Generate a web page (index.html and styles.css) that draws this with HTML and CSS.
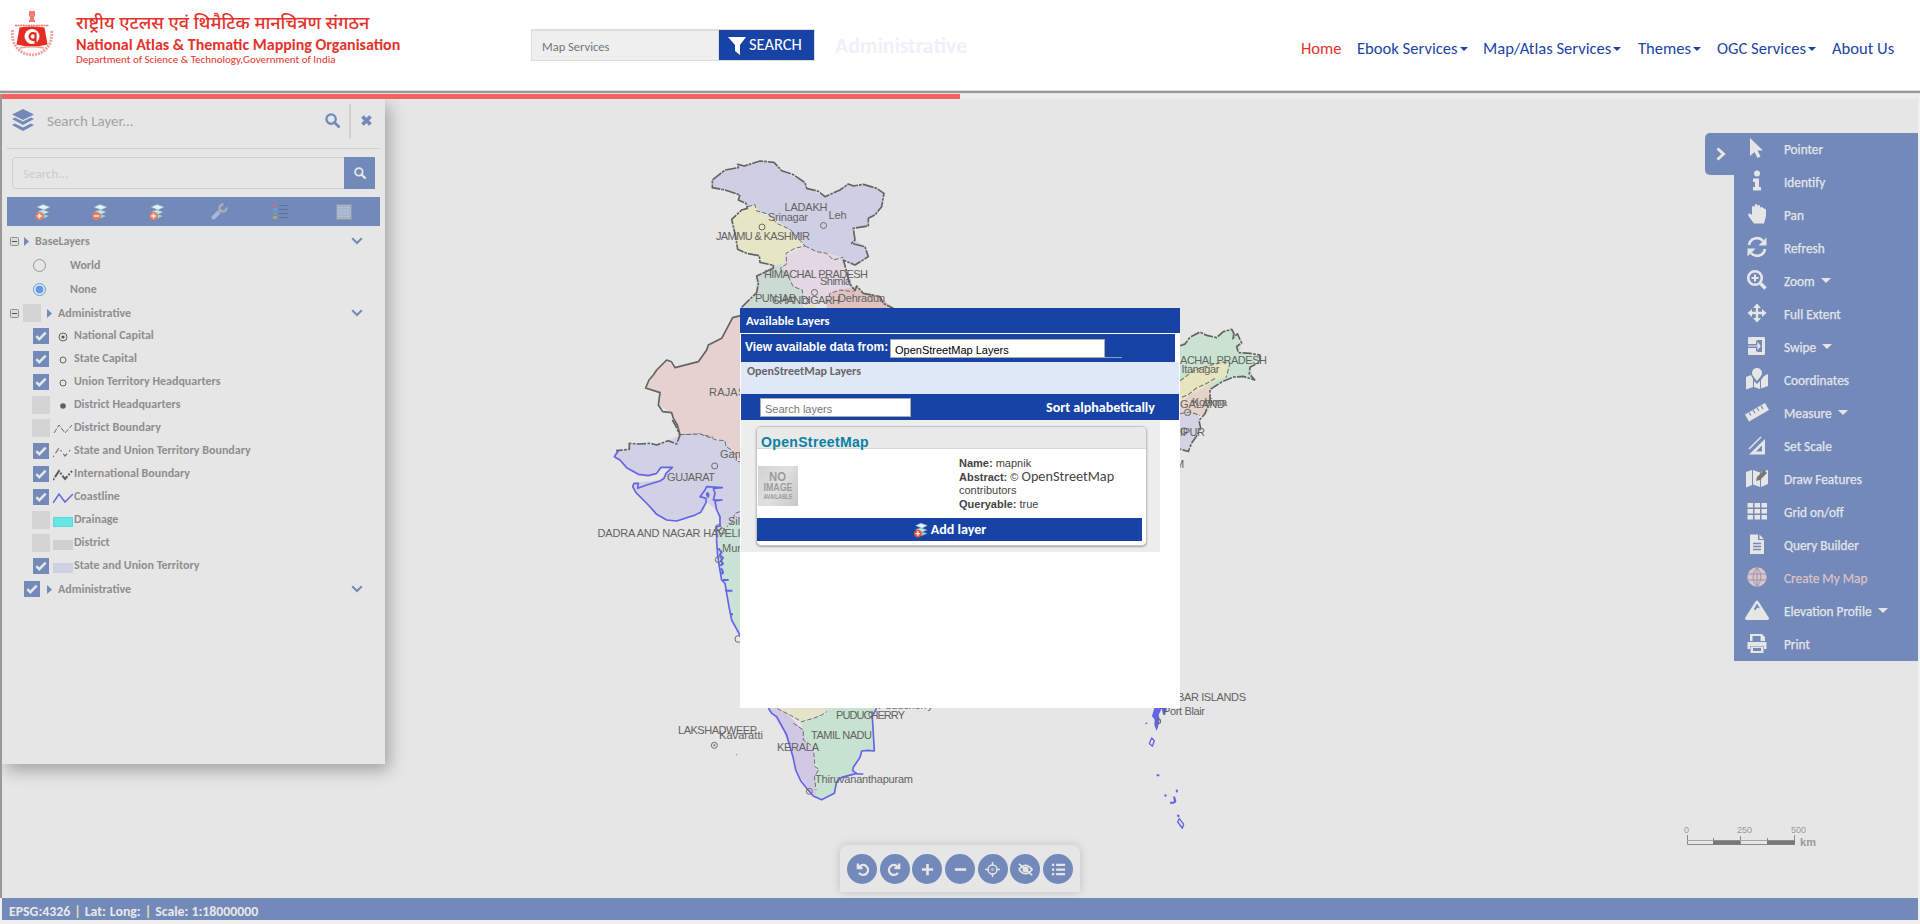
FILE: index.html
```html
<!DOCTYPE html>
<html lang="en">
<head>
<meta charset="utf-8">
<title>National Atlas &amp; Thematic Mapping Organisation</title>
<link rel="stylesheet" href="styles.css">
</head>
<body>
<svg width="0" height="0" class="defs">
  <defs>
    <symbol id="check" viewBox="0 0 16 16"><path d="M3.3 8.2l3 3L12.700 4.700" fill="none" stroke="#e6e6e6" stroke-width="2.500"/></symbol>
    <symbol id="search" viewBox="0 0 16 16"><circle cx="6.500" cy="6.500" r="5" fill="none" stroke="currentColor" stroke-width="2.400"/><path d="M10 10l4.500 4.500" stroke="currentColor" stroke-width="3" stroke-linecap="round"/></symbol>
    <symbol id="stack" viewBox="0 0 16 18"><path d="M2 12.500l6-2 7 2.500-6 2.500z" fill="#a9cbd6" stroke="#5c8ba0" stroke-width=".6"/><path d="M2 8.500l6-2 7 2.500-6 2.500z" fill="#c9e2ea" stroke="#5c8ba0" stroke-width=".6"/><path d="M2 4l6-2.500L15 4 9 7z" fill="#e4f2f6" stroke="#8db3c2" stroke-width=".6"/></symbol>
    <symbol id="chev" viewBox="0 0 12 8"><path d="M1.200 1.200L6 6l4.800-4.800" fill="none" stroke="#7289ba" stroke-width="2"/></symbol>
    <symbol id="tri" viewBox="0 0 5 9"><path d="M0 0l5 4.500L0 9z" fill="#7289ba"/></symbol>
    <symbol id="minus" viewBox="0 0 9 9"><rect x=".5" y=".5" width="8" height="8" rx="1" fill="#dcdcdc" stroke="#8d8d8d"/><path d="M2 4.500h5" stroke="#555"/></symbol>
  </defs>
</svg>

<header class="top">
  <div class="brand">
    <svg class="logo" viewBox="0 0 44 50" width="44" height="50">
      <path d="M19 2h6v5l-1 1v3h1v2h-6v-2h1V8l-1-1z" fill="#ee7d76"/>
      <path d="M5 16.500h34" stroke="#ea7068" stroke-width="1.500" stroke-dasharray="2 .6"/>
      <path d="M9.500 18.500q12-2 25 0l3 17q-15 4-31 0z" fill="#e62b22"/>
      <circle cx="22" cy="27.500" r="7.500" fill="#fff"/>
      <path d="M25.500 23.500v10.500M25.500 25.500a3.300 3.300 0 1 0 0 4" fill="none" stroke="#e62b22" stroke-width="2.200"/>
      <path d="M10 39q12-2.500 24 0" fill="none" stroke="#f09a94" stroke-width="1.500"/>
      <path d="M2.500 21C-1 54 45 54 41.500 21" fill="none" stroke="#f2a29c" stroke-width="3" stroke-dasharray="2 1"/>
    </svg>
    <div class="names">
      <div class="hi" lang="hi">राष्ट्रीय एटलस एवं थिमैटिक मानचित्रण संगठन</div>
      <div class="en">National Atlas &amp; Thematic Mapping Organisation</div>
      <div class="dept">Department of Science &amp; Technology,Government of India</div>
    </div>
  </div>
  <div class="finder">
    <div class="finder-input">Map Services</div>
    <div class="finder-btn"><svg width="18" height="18" viewBox="0 0 18 18"><path d="M0 0h18l-6 8v10l-5-4V8z" fill="#fff"/></svg><span>SEARCH</span></div>
  </div>
  <div class="theme">Administrative</div>
  <nav class="nav">
    <a class="on">Home</a><a class="dd">Ebook Services</a><a class="dd">Map/Atlas Services</a><a class="dd">Themes</a><a class="dd">OGC Services</a><a>About Us</a>
  </nav>
</header>
<div class="rule"></div>

<main class="stage">
  <div class="progress"><div class="bar"></div></div>

  <svg class="map" width="1920" height="924" viewBox="0 0 1920 924">
    <g transform="translate(560 140) scale(.33333)" stroke-linejoin="round">
      <path fill="#cfcfe4" d="M457 120L495 90 535 80 600 63 642 67 665 92 735 128 740 145 795 170 840 150 865 132 910 135 950 145 972 160 965 200 945 225 925 235 925 258 880 265 885 300 915 320 925 350 885 375 850 355 800 340 760 335 735 318 700 280 650 240 620 222 570 212 558 190 535 180 540 165 495 150 457 143z"/>
      <path fill="#e6e6c6" d="M515 238L560 205 588 193 600 222 625 228 680 268 735 318 705 325 678 340 680 372 640 376 600 365 598 347 560 340 533 328 527 290z"/>
      <path fill="#e2d7e2" d="M735 318L770 335 800 340 850 358 860 395 878 440 880 455 840 450 810 460 800 490 730 490 727 450 700 440 685 410 668 380 680 345z"/>
      <path fill="#cbdbd3" d="M640 376L665 372 685 410 700 440 727 450 730 500 760 510 545 510 590 460 590 410z"/>
      <path fill="#e0c3c0" d="M800 490L810 460 840 450 890 438 910 460 960 470 1000 505 1000 560 800 560z"/>
      <path fill="#e5e3bd" d="M735 505l20-15 20 15v20h-40z"/>
      <path fill="#e5d1d0" d="M545 525L518 533 485 595 445 615 415 665 345 683 320 660 290 690 257 740 300 758 295 795 335 818 360 885 420 882 460 892 490 905 500 940 530 960 900 960 900 525z"/>
      <g fill="none" stroke="#636363" stroke-width="5" stroke-dasharray="34 3 8 3">
        <path d="M545 502L590 458 595 430 590 408 640 385 640 376 600 367 598 347 560 340 533 328 527 290 515 238 545 210 562 205 558 190 535 180 540 165 495 150 457 143 457 120 495 90 535 83 533 73 553 78 600 63 642 67 665 92 700 104 735 128 740 145 775 154 795 170 840 150 865 132 880 138 910 133 950 145 972 160 965 200 945 225 925 235 925 258 880 265 885 300 875 310 915 320 925 350 885 375 850 360 860 395 868 430 885 452 890 438 910 460 960 470 970 490 1000 505"/>
        <path stroke-dasharray="none" d="M545 526L518 533 485 595 445 615 440 630 415 665 345 683 334 665 320 660 290 690 280 705 267 720 257 744 300 758 295 795 308 815 335 818 340 835 352 855 360 885"/>
      </g>
      <g fill="none" stroke="#6d6d6d" stroke-width="3" stroke-dasharray="14 6">
        <path d="M562 200L585 194 590 213 625 222 650 250 690 268 735 318 705 325 678 340 680 372 660 385 685 410 700 440 727 450 730 490M735 318L770 335 800 340 820 360 850 352M800 490L810 460 840 450 880 455M355 885L420 882 460 892"/>
      </g>
    </g>
    <g transform="translate(560 420) scale(.33333)" stroke-linejoin="round">
      <path fill="#d1d1e5" d="M168 92L208 88 208 70 290 75 325 62 360 45 420 42 470 60 495 62 510 90 535 125 560 130 560 320 480 315 470 270 440 245 432 270 350 303 310 298 265 255 218 200 225 188 300 180 335 145 305 145 265 167 235 163 180 125 163 110z"/>
      <path fill="#c9e3d6" d="M473 320L560 300 560 650 537 645 510 590 495 490 478 440z"/>
      <path fill="none" stroke="#636363" stroke-width="5" stroke-dasharray="28 4 8 4" d="M337 0L345 14 360 45 350 72 325 62 290 75 270 70 240 72 208 70 208 88 168 92"/>
      <path fill="none" stroke="#6d6d6d" stroke-width="3" stroke-dasharray="14 6" d="M360 44L420 42 470 60 495 62 498 80 515 90 530 110 528 123 540 125M540 275L525 280 515 310 500 320"/>
      <path fill="none" stroke="#6464e6" stroke-width="5" d="M175 92L163 110 180 120 200 143 235 163 265 167 290 160 303 142 337 142 318 160 312 175 300 183 260 195 233 205 235 190 222 190 218 200 228 218 265 255 290 283 320 300 350 303 400 287 422 277 430 262 438 248 438 235 420 230 435 210 440 200 487 203 460 205 465 220 460 240 486 240 465 243 470 270 480 290 480 318 470 320 470 365 473 405 478 440 485 480 495 490 500 520 507 560 515 600 537 640 540 650"/>
      <path fill="none" stroke="#6464e6" stroke-width="6" d="M442 218q6 5 2 12-5-4-2-12M475 385l10 12-6 8 10 8-6 10 6 8-8 6M483 445l6 10-4 8M483 460l8 0M488 480l18 0M497 512l20 0M510 583l9 0"/>
      <g fill="none" stroke="#6b6b6b" stroke-width="3"><circle cx="464" cy="138" r="9"/><circle cx="487" cy="333" r="9"/><circle cx="475" cy="323" r="9"/><circle cx="475" cy="419" r="9"/><circle cx="535" cy="657" r="10"/></g>
    </g>
    <g transform="translate(640 680) scale(.33333)" stroke-linejoin="round">
      <path fill="#d1c8e4" d="M385 84L425 84 465 125 490 150 497 180 520 210 525 260 535 270 525 320 530 350 510 335 470 275 460 235 430 150z"/>
      <path fill="#c7e2d0" d="M550 84L710 84 697 110 703 213 665 213 638 270 650 280 600 298 590 310 583 340 545 359 528 350 525 300 535 270 525 240 525 210 500 190 490 150 480 125 510 115 560 100z"/>
      <path fill="#e5e4ca" d="M410 84L550 84 560 98 530 108 505 123 480 123 450 105z"/>
      <path fill="none" stroke="#6d6d6d" stroke-width="3" stroke-dasharray="14 6" d="M412 86L450 105 485 125 520 115 545 105 560 95M460 130L490 150 490 180 520 200 525 260 537 268 523 290 528 330"/>
      <path fill="none" stroke="#6464e6" stroke-width="5" d="M385 84L395 100 410 110 440 165 460 235 467 270 482 302 500 325 520 348 545 359 583 340 590 305 605 292 650 280 638 272 640 262 660 232 665 213 685 211 703 213 697 110 710 84M650 282l20 0"/>
      <g fill="none" stroke="#6b6b6b" stroke-width="3"><circle cx="223" cy="196" r="9"/><circle cx="508" cy="334" r="9"/><circle cx="693" cy="103" r="7"/></g>
      <circle cx="223" cy="196" r="3" fill="#6b6b6b"/><circle cx="290" cy="224" r="2" fill="#88a"/>
    </g>
    <g transform="translate(1100 300) scale(.33333 .34435)" stroke-linejoin="round">
      <path fill="#c9e3d0" d="M240 130L300 93 350 108 370 90 395 85 425 130 415 153 480 165 450 195 462 232 430 225 380 230 330 260 300 250 240 240z"/>
      <path fill="#e6e5bd" d="M240 235L280 200 310 190 385 183 380 220 345 235 270 275 240 290z"/>
      <path fill="#e5d3c8" d="M240 300L270 275 335 245 330 290 325 325 295 340 240 325z"/>
      <path fill="#d3d3e5" d="M240 325L295 330 300 365 290 395 265 440 240 432z"/>
      <path fill="none" stroke="#636363" stroke-width="5" stroke-dasharray="28 4 8 4" d="M240 133L255 128 270 108 300 93 320 103 350 109 370 92 395 85 402 98 398 112 412 98 425 125 410 135 415 153 450 155 480 160 480 180 450 195 448 215 464 232 430 222 400 224 365 238 330 260 330 290 315 330 297 350 302 372 290 395 275 415 265 440 240 433"/>
      <path fill="none" stroke="#6d6d6d" stroke-width="3" stroke-dasharray="14 6" d="M240 235L280 205 310 195 370 180 390 185 378 225M345 228L315 245 290 255 265 275 240 285M240 330L270 325 300 335"/>
      <circle cx="263" cy="326" r="9" fill="none" stroke="#6b6b6b" stroke-width="3"/><circle cx="252" cy="381" r="9" fill="none" stroke="#6b6b6b" stroke-width="3"/>
      <g fill="#6464e6" stroke="#6464e6" stroke-width="6"><path d="M166 1186h16l-9 18 3 16-6 24-4-10 1-16-8-10zM188 1186l4 16 6-14zM138 1228l2 3M168 1247l2 0M170 1380l8 0M195 1436l3 6M230 1422l1 8M222 1442l4 14-5 4M210 1460l12 0M232 1496l6 4"/><path fill="#e5e5c9" stroke-width="4" d="M155 1272l8 8-6 16-9-8z"/><path fill="#e5e5c9" stroke-width="4" d="M238 1506l13 16-4 12-14-18z"/></g>
      <circle cx="175" cy="1223" r="7" fill="none" stroke="#6b6b6b" stroke-width="3"/>
    </g>
    <g fill="none" stroke="#6b6b6b"><circle cx="762" cy="227" r="3"/><circle cx="823.500" cy="225.500" r="3"/><circle cx="814.500" cy="292.500" r="3"/><circle cx="806" cy="301" r="3"/></g>
    <g class="lbl">
      <text x="784.500" y="211" textLength="43">LADAKH</text>
      <text x="768" y="221" textLength="40">Srinagar</text>
      <text x="828.500" y="219" textLength="18">Leh</text>
      <text x="716" y="240" textLength="94">JAMMU &amp; KASHMIR</text>
      <text x="764" y="278" textLength="104">HIMACHAL PRADESH</text>
      <text x="820" y="285" textLength="31">Shimla</text>
      <text x="755" y="302" textLength="41">PUNJAB</text>
      <text x="772" y="304" textLength="68">CHANDIGARH</text>
      <text x="838" y="302" textLength="47">Dehradun</text>
      <text x="709" y="396" textLength="67">RAJASTHAN</text>
      <text x="720" y="458">Gandhinagar</text>
      <text x="667" y="481" textLength="48">GUJARAT</text>
      <text x="728" y="525">Silvassa</text>
      <text x="597.500" y="537" textLength="143">DADRA AND NAGAR HAVELI</text>
      <text x="722" y="552">Mumbai</text>
      <text x="1180" y="364" textLength="87">ACHAL PRADESH</text>
      <text x="1181.500" y="373" textLength="38">Itanagar</text>
      <text x="1180" y="408" textLength="45">GALAND</text>
      <text x="1192" y="406" textLength="35">Kohima</text>
      <text x="1180" y="436" textLength="25">IPUR</text>
      <text x="1175" y="468">M</text>
      <text x="1177" y="701" textLength="69">BAR ISLANDS</text>
      <text x="1163" y="715" textLength="42">Port Blair</text>
      <text x="678" y="734" textLength="79">LAKSHADWEEP</text>
      <text x="719" y="739" textLength="44">Kavaratti</text>
      <text x="878" y="709" textLength="55">Puducherry</text>
      <text x="836" y="719" textLength="69">PUDUCHERRY</text>
      <text x="811" y="739" textLength="61">TAMIL NADU</text>
      <text x="777" y="751" textLength="42">KERALA</text>
      <text x="815" y="783" textLength="98">Thiruvananthapuram</text>
    </g>
    <g class="scale">
      <text x="1684" y="833">0</text><text x="1737" y="833" textLength="15">250</text><text x="1791" y="833" textLength="15">500</text>
      <text class="km" x="1800" y="846" textLength="16">km</text>
      <path d="M1687.500 835v9.500h107V835M1713.500 838v6M1740.500 836v8M1767.500 838v6" fill="none" stroke="#8a8a8a"/>
      <path d="M1687 840.500h108" stroke="#a6a6a6"/><path d="M1713 842.500h27M1767 842.500h28" stroke="#777" stroke-width="4"/>
    </g>
  </svg>

  <aside class="layers">
    <div class="lhead">
      <svg width="22" height="23" viewBox="0 0 22 23" fill="#7289ba"><path d="M11 0l11 5.500L11 11 0 5.500z"/><path d="M0 10l3-1.500 8 4 8-4 3 1.500-11 6z"/><path d="M0 16l3-1.500 8 4 8-4 3 1.500-11 6z"/></svg>
      <span class="lt">Search Layer...</span>
      <svg class="ls" width="15" height="15"><use href="#search"/></svg>
      <i class="vr"></i>
      <svg width="11" height="11" viewBox="0 0 11 11"><path d="M1.500 1.500l8 8M9.500 1.500l-8 8" stroke="#7289ba" stroke-width="3.800"/></svg>
    </div>
    <div class="lfind"><div class="lin">Search...</div><div class="lbtn"><svg width="12" height="12"><use href="#search"/></svg></div></div>
    <div class="tools">
      <svg width="16" height="18"><use href="#stack"/><circle cx="4.500" cy="13" r="4.300" fill="#e27c62"/><path d="M2 13h5M4.500 10.500v5" stroke="#eee" stroke-width="1.500"/></svg>
      <svg width="16" height="18"><use href="#stack"/><circle cx="4.500" cy="13" r="4.300" fill="#e27c62"/><path d="M2 13h5" stroke="#eee" stroke-width="1.500"/></svg>
      <svg width="16" height="18"><use href="#stack"/><circle cx="4.500" cy="13" r="4.300" fill="#e27c62"/><path d="M2 13h5M4.500 10.500v5" stroke="#eee" stroke-width="1.500"/></svg>
      <svg width="17" height="17" viewBox="0 0 17 17"><path d="M2.500 14.500l5-5" stroke="#a5b8d8" stroke-width="4" stroke-linecap="round"/><path d="M7 9.500l3-3" stroke="#a9adb5" stroke-width="3"/><path d="M12.500 1.500a3.500 3.500 0 1 0 3 3" fill="none" stroke="#a9adb5" stroke-width="2.500"/></svg>
      <svg width="15" height="16" viewBox="0 0 15 16"><path fill="#b96f86" d="M0 0h4v3H0z"/><path fill="#7594dc" d="M0 4h4v3H0z"/><path fill="#6fa184" d="M0 8h4v3H0z"/><path fill="#b3a08b" d="M0 12h4v3H0z"/><path d="M6 1.500h9M6 5.500h9M6 9.500h9M6 13.500h9" stroke="#5c709e"/></svg>
      <svg width="16" height="16" viewBox="0 0 16 16"><rect x=".5" y=".5" width="15" height="15" fill="#a5b4cf" stroke="#8f979f"/><path d="M2 3.500h12M2 6.500h12M2 9.500h12M2 12.500h12" stroke="#b9c6da" stroke-dasharray="1.500 1.500"/></svg>
    </div>
    <ul class="tree">
      <li class="grp base"><svg class="pm" width="9" height="9"><use href="#minus"/></svg><svg class="ar" width="5" height="9"><use href="#tri"/></svg><b>BaseLayers</b><svg class="cv" width="12" height="8"><use href="#chev"/></svg></li>
      <li class="radio"><i></i><b>World</b></li>
      <li class="radio sel"><i></i><b>None</b></li>
      <li class="grp"><svg class="pm" width="9" height="9"><use href="#minus"/></svg><i class="off g"></i><svg class="ar" width="5" height="9"><use href="#tri"/></svg><b>Administrative</b><svg class="cv" width="12" height="8"><use href="#chev"/></svg></li>
      <li class="it first"><svg class="ck" width="16" height="16"><use href="#check"/></svg><svg class="sw" width="20" height="14"><circle cx="10" cy="8" r="4" fill="none" stroke="#636363"/><circle cx="10" cy="8" r="1.600" fill="#555"/></svg><b>National Capital</b></li>
      <li class="it"><svg class="ck" width="16" height="16"><use href="#check"/></svg><svg class="sw" width="20" height="14"><circle cx="10" cy="8" r="3" fill="none" stroke="#636363"/></svg><b>State Capital</b></li>
      <li class="it"><svg class="ck" width="16" height="16"><use href="#check"/></svg><svg class="sw" width="20" height="14"><circle cx="10" cy="8" r="3" fill="none" stroke="#636363"/></svg><b>Union Territory Headquarters</b></li>
      <li class="it"><i class="off"></i><svg class="sw" width="20" height="14"><circle cx="10" cy="8" r="2.800" fill="#606060"/></svg><b>District Headquarters</b></li>
      <li class="it"><i class="off"></i><svg class="sw" width="20" height="14"><path d="M1 12l5-8 6 8 7-8" fill="none" stroke="#6e6e6e" stroke-dasharray="5 1.500"/></svg><b>District Boundary</b></li>
      <li class="it"><svg class="ck" width="16" height="16"><use href="#check"/></svg><svg class="sw" width="20" height="14"><path d="M0 13l6-9 6 8 7-8" fill="none" stroke="#6e6e6e" stroke-width="1.200" stroke-dasharray="1.500 3 6 3"/></svg><b>State and Union Territory Boundary</b></li>
      <li class="it"><svg class="ck" width="16" height="16"><use href="#check"/></svg><svg class="sw" width="20" height="14"><path d="M0 13l6-9 6 8 7-8" fill="none" stroke="#5c5c5c" stroke-width="2" stroke-dasharray="2 1.500 8 1.500"/></svg><b>International Boundary</b></li>
      <li class="it"><svg class="ck" width="16" height="16"><use href="#check"/></svg><svg class="sw" width="20" height="14"><path d="M0 13l6-9 6 8 8-8" fill="none" stroke="#6464e6" stroke-width="1.500"/></svg><b>Coastline</b></li>
      <li class="it"><i class="off"></i><svg class="sw" width="20" height="14"><path d="M.5 4.500h19v9H.5z" fill="#67e6e6" stroke="#55d9dc"/></svg><b>Drainage</b></li>
      <li class="it"><i class="off"></i><svg class="sw" width="20" height="14"><path d="M0 4h20v10H0z" fill="#cfcfcf"/></svg><b>District</b></li>
      <li class="it"><svg class="ck" width="16" height="16"><use href="#check"/></svg><svg class="sw" width="20" height="14"><path d="M0 4h20v10H0z" fill="#d0d0e3"/></svg><b>State and Union Territory</b></li>
      <li class="grp last"><svg class="ck" width="16" height="16"><use href="#check"/></svg><svg class="ar" width="5" height="9"><use href="#tri"/></svg><b>Administrative</b><svg class="cv" width="12" height="8"><use href="#chev"/></svg></li>
    </ul>
  </aside>

  <aside class="side">
    <div class="tab"><svg width="10" height="14" viewBox="0 0 10 14"><path d="M1.500 1.500L7.500 7l-6 5.500" fill="none" stroke="#e6e6e6" stroke-width="3"/></svg></div>
    <ul>
      <li><svg viewBox="0 0 24 24"><path d="M5 2v18l4.500-4 3 6 3-1.500-3-6h5.500z"/></svg>Pointer</li>
      <li><svg viewBox="0 0 24 24"><circle cx="12" cy="4.500" r="3"/><path d="M8 9.500h6V18h2v3.500H8V18h2v-5H8z"/></svg>Identify</li>
      <li><svg viewBox="0 0 24 24"><path d="M9 21.500L3.500 14q-1-2 .5-2.500t3 1.500V5q1.300-2 2.600 0V3q1.400-2 2.800 0v1q1.500-2 2.800 0v2q1.500-2 3 0l2.800 1.500V14l-2 7.500z"/></svg>Pan</li>
      <li><svg viewBox="0 0 24 24"><g fill="none" stroke="#e6e6e6" stroke-width="2.600"><path d="M4 10a8 8 0 0 1 14-4M20 14a8 8 0 0 1-14 4"/></g><path d="M21.500 2.500v8h-8zM2.500 21.500v-8h8z"/></svg>Refresh</li>
      <li><svg viewBox="0 0 24 24"><g fill="none" stroke="#e6e6e6" stroke-width="2.600"><circle cx="10" cy="10" r="6.800"/><path d="M6.500 10h7M10 6.500v7" stroke-width="2"/><path d="M15.500 15.500l5 5" stroke-width="3.500"/></g></svg><span class="dd">Zoom</span></li>
      <li><svg viewBox="0 0 24 24"><path d="M12 2.500l4 4.500h-2.800v3.800H17V8l4.500 4-4.500 4v-2.800h-3.800V17H16l-4 4.500L8 17h2.800v-3.800H7V16l-4.500-4L7 8v2.800h3.800V7H8z"/></svg>Full Extent</li>
      <li><svg viewBox="0 0 24 24"><path fill-rule="evenodd" d="M4 3h15q1 0 1 1v16q0 1-1 1H4q-1 0-1-1v-6h8v3l2 1h4V6h-4l-2 1v3H3V4q0-1 1-1z"/><path d="M3 12h10v-2.500l2 2.500-2 2.500V12" stroke="#e6e6e6" stroke-width="1.200"/></svg><span class="dd">Swipe</span></li>
      <li><svg viewBox="0 0 24 24"><path d="M12 1a5 5 0 0 1 5 5c0 3-3 5-5 8-2-3-5-5-5-8a5 5 0 0 1 5-5zM1 10l5-2 2 4v8l-7 2.500zM9 14l3 3 3-3v8l-6-2zM16 13l3-4 4-2v12l-7 2.500z"/></svg>Coordinates</li>
      <li><svg viewBox="0 0 24 24"><path d="M0 14.500L20 3l4 7L4 21.500z"/><path d="M4 12.500l2 3M8 10.200l2 3M12 8l2 3M16 5.800l2 3" stroke="#7289ba" stroke-width="1.200"/></svg><span class="dd">Measure</span></li>
      <li><svg viewBox="0 0 24 24"><path d="M4 21.500L20 6v15.500zm7-3h6v-6z" fill-rule="evenodd"/><path d="M4 16L16 4" stroke="#e6e6e6" stroke-width="1.500"/></svg>Set Scale</li>
      <li><svg viewBox="0 0 24 24"><path d="M1 6l6-2v15l-6 2.500zM8 4l7 2.500V21l-7-2.500zM16 6l7-2v14l-7 3z"/><path d="M11 15l1-4 7-7 3 3-7 7z" fill="#777" /></svg>Draw Features</li>
      <li><svg viewBox="0 0 24 24"><path d="M2.500 4h5.500v4.500H2.500zM9.500 4H15v4.500H9.500zM16.500 4H22v4.500h-5.500zM2.500 10h5.500v4.500H2.500zM9.500 10H15v4.500H9.500zM16.500 10H22v4.500h-5.500zM2.500 16h5.500v4.500H2.500zM9.500 16H15v4.500H9.500zM16.500 16H22v4.500h-5.500z"/></svg>Grid on/off</li>
      <li><svg viewBox="0 0 24 24"><path d="M5 2.500h8V8h6v14H5zM14.500 2.500L19 7h-4.500z"/><path d="M8 11.500h8M8 14.500h8M8 17.500h8" stroke="#7289ba" stroke-width="1.300"/></svg>Query Builder</li>
      <li class="hot"><svg viewBox="0 0 24 24"><circle cx="12" cy="12" r="9.700" fill="#ddc3c5"/><path d="M2.500 9h19M2.500 15h19M12 2v20M12 2.500q-8 9 0 19M12 2.500q8 9 0 19" fill="none" stroke="#8c93b8" stroke-width=".9"/></svg>Create My Map</li>
      <li><svg viewBox="0 0 24 24"><path d="M12 2.500q1 0 1.500 1L24 20q0 2-1.500 2h-21Q0 22 0 20L10.500 3.500q.5-1 1.500-1z"/><path d="M12 5.500l3 5-2.500-1-2.500 3-1-1.500z" fill="#7289ba"/></svg><span class="dd">Elevation Profile</span></li>
      <li><svg viewBox="0 0 24 24"><path d="M5 10V3h12l3 3v4zM2.500 11h19v7H19v-3H5v3H2.500zM5.500 15.500h13V22h-13z"/><path d="M7.500 5h8v5h-8zM8 17h8v3H8z" fill="#7289ba"/></svg>Print</li>
    </ul>
  </aside>

  <div class="dock">
    <i><svg viewBox="0 0 16 16"><path d="M3 1.500v5h5M4 6a5.300 5.300 0 1 1 .3 5.500"/></svg></i>
    <i><svg viewBox="0 0 16 16"><path d="M13 1.500v5H8M12 6a5.300 5.300 0 1 0-.3 5.500"/></svg></i>
    <i><svg viewBox="0 0 16 16"><path stroke-width="2.800" d="M2 8h12M8 2v12"/></svg></i>
    <i><svg viewBox="0 0 16 16"><path stroke-width="2.800" d="M2 8h12"/></svg></i>
    <i><svg viewBox="0 0 16 16"><circle cx="8" cy="8" r="4.800" stroke-width="1.500"/><circle cx="8" cy="8" r="1" stroke-width="1"/><path stroke-width="1.500" d="M8 0v4M8 12v4M0 8h4M12 8h4"/></svg></i>
    <i><svg viewBox="0 0 16 16"><path stroke-width="1.800" d="M1 8q7-9 14 0-7 9-14 0"/><circle cx="8" cy="8" r="2"/><path stroke-width="1.800" d="M1 2l14 12"/></svg></i>
    <i><svg viewBox="0 0 16 16"><path d="M1 3h2.500M1 8h2.500M1 13h2.500M5.500 3H15M5.500 8H15M5.500 13H15"/></svg></i>
  </div>

  <section class="modal">
    <h2>Available Layers</h2>
    <div class="src"><b>View available data from:</b><div class="select">OpenStreetMap Layers</div><i></i></div>
    <div class="srcname">OpenStreetMap Layers</div>
    <div class="filter"><div class="fin">Search layers</div><b>Sort alphabetically</b></div>
    <div class="results">
      <div class="card">
        <h3>OpenStreetMap</h3>
        <div class="info">
          <div class="noimg"><svg width="40" height="40" viewBox="0 0 40 40"><text x="11" y="15" textLength="17" lengthAdjust="spacingAndGlyphs">NO</text><text class="l2" x="5.500" y="25" textLength="29" lengthAdjust="spacingAndGlyphs">IMAGE</text><text class="l3" x="5.500" y="33" textLength="29" lengthAdjust="spacingAndGlyphs">AVAILABLE</text></svg></div>
          <div class="meta">
            <div><b>Name:</b> mapnik</div>
            <div><b>Abstract:</b> © <span class="osm">OpenStreetMap</span></div>
            <div>contributors</div>
            <div><b>Queryable:</b> true</div>
          </div>
        </div>
        <div class="add"><svg width="16" height="16" viewBox="0 0 16 18"><use href="#stack"/><circle cx="4.500" cy="13" r="4.300" fill="#e8532f"/><path d="M2 13h5M4.500 10.500v5" stroke="#fff" stroke-width="1.500"/></svg>Add layer</div>
      </div>
    </div>
  </section>
</main>
<footer class="status"><span>EPSG:4326</span><em>|</em><span>Lat:</span><span>Long:</span><em>|</em><span>Scale: 1:18000000</span></footer>
</body>
</html>
```
FILE: styles.css
```css
* { box-sizing: border-box; }
body { margin: 0; width: 1920px; height: 924px; overflow: hidden; display: flex; flex-direction: column; background: #f0f0f0; font-family: Carlito, Lato, sans-serif; }
ul { margin: 0; padding: 0; list-style: none; }
i, em { font-style: normal; }
.defs { position: absolute; }

.top { height: 90px; background: #fff; display: flex; align-items: flex-start; flex: none; }
.brand { display: flex; width: 531px; padding: 9px 0 0 10px; }
.logo { flex: none; margin-right: 22px; }
.names { color: #e5322b; white-space: nowrap; }
.hi { font-family: "Noto Sans Devanagari", "Noto Sans", sans-serif; font-size: 18px; font-weight: 500; line-height: 31px; height: 27px; }
.en { font-size: 16px; font-weight: 700; line-height: 17px; }
.dept { font-size: 11px; line-height: 14px; }
.finder { display: flex; width: 284px; height: 32px; margin-top: 29px; border: 1px solid #dcdfdf; background: #efefef; }
.finder-input { width: 187px; padding: 9px 0 0 10px; font-size: 12.500px; color: #6f767d; border-right: 1px solid #dcdfdf; box-shadow: inset 0 1px #dcdfdf; line-height: 16px; }
.finder-btn { flex: 1; background: #1743a6; color: #fff; display: flex; gap: 3px; padding: 7px 0 0 9px; font-size: 16.500px; line-height: 15px; }
.theme { margin: 34px 0 0 20px; width: 466px; font-size: 21.700px; line-height: 24px; font-weight: 700; color: #eef1f9; }
.nav { display: grid; grid-template-columns: 56px 126px 155px 79px 115px 80px; margin-top: 37px; font-size: 16.600px; line-height: 22px; color: #1c44a4; white-space: nowrap; }
.nav .on { color: #e5322b; }
.nav .dd::after { content: ""; display: inline-block; margin-left: 2px; vertical-align: 3px; border: 4px solid transparent; border-top-color: #1c44a4; border-bottom: 0; }
.rule { height: 4px; flex: none; border-top: 1px solid #dcdcdc; background: linear-gradient(#999 0 2px, #e3e3e3 2px); }

.stage { position: relative; flex: none; height: 804px; background: #e6e6e6; border-left: 2px solid #999; border-right: 2px solid #f0f0f0; }
.progress { height: 5px; background: #ececec; }
.bar { width: 958px; height: 5px; background: #fa5f5f; }
.map { position: absolute; left: -2px; top: -94px; }
.lbl { font: 11px "Liberation Sans", Arial, sans-serif; fill: #636363; }
.scale { font: 9px "Liberation Sans", Arial, sans-serif; fill: #999; }
.km { font-size: 11px; font-weight: 700; }

.layers { position: absolute; left: 0; top: 5px; width: 383px; height: 665px; background: #e6e6e6; box-shadow: 4px 6px 16px rgba(0,0,0,.3); clip-path: inset(0 -30px -30px 0); padding: 0 5px; color: #888; }
.lhead { display: flex; align-items: center; height: 50px; border-bottom: 1px solid #d2d2d2; padding: 0 8px 7px 5px; }
.lt { margin-left: 13px; flex: 1; font-size: 15px; padding-top: 2px; color: #a3a3a3; }
.ls { color: #7289ba; }
.vr { width: 2px; height: 35px; background: #d0d0d0; margin: 2px 10px 0 9px; }
.lfind { display: flex; margin: 8px 5px; height: 32px; border: 1px solid #d0d0d0; border-radius: 4px 0 0 4px; }
.lin { flex: 1; padding: 8px 10px; font-size: 13px; line-height: 16px; color: #cbcbcb; }
.lbtn { width: 31px; margin: -1px; background: #7289ba; color: #e6e6e6; display: grid; place-items: center; }
.tools { height: 29px; background: #7289ba; display: grid; grid-template-columns: 57px 57px 62px 62px 63px 16px; padding-left: 28px; align-items: center; }
.tree { padding-top: 3px; margin-left: -5px; font-size: 12px; white-space: nowrap; }
.tree li { display: flex; align-items: center; height: 23px; }
.tree .grp, .tree .radio { height: 24px; }
.tree .first { margin-top: -1px; }
.tree b { font-weight: 700; color: #8e8e8e; padding-bottom: 1px; }
.grp { padding: 0 17px 0 8px; }
.pm { margin-right: 5px; }
.grp .ar { margin-right: 6px; }
.cv { margin-left: auto; }
.off { width: 18px; height: 18px; background: #d4d4d4; }
.off.g { margin: 0 6px 0 -1px; }
.radio { padding-left: 31px; }
.radio i { width: 13px; height: 13px; border: 1px solid #969696; border-radius: 50%; margin-right: 24px; }
.radio.sel i { border-color: #5e9ce4; background: radial-gradient(circle, #5e9ce4 0 3.700px, transparent 4.200px); }
.ck { background: #7289ba; }
.it { padding-left: 30px; }
.it .ck { margin: 0 4px 0 1px; }
.it .off { margin-right: 3px; }
.it .sw { margin-right: 1px; }
.tree .it b { padding-bottom: 2px; }
.tree .last { height: 24px; padding-left: 22px; }
.last .ck { margin-right: 7px; }

.side { position: absolute; right: 0; top: 39px; width: 213px; height: 528px; display: flex; align-items: flex-start; }
.tab { width: 29px; height: 42px; background: #7289ba; border-radius: 5px 0 0 5px; display: grid; place-items: center; padding-left: 2px; }
.side ul { width: 184px; height: 528px; background: #7289ba; }
.side li { height: 33px; display: flex; align-items: center; padding: 0 0 0 11px; color: #e4e6ea; font-size: 13.300px; -webkit-text-stroke: .25px currentColor; white-space: nowrap; }
.side li svg { width: 24px; height: 24px; fill: #e6e6e6; margin: -4px 15px 0 0; flex: none; }
.side .hot { color: #ddc3c5; }
.side .dd::after { content: ""; display: inline-block; margin-left: 6px; vertical-align: 3px; border: 5px solid transparent; border-top-color: #e6e6e6; border-bottom: 0; }

.dock { position: absolute; left: 838px; top: 751px; width: 240px; height: 47px; border-radius: 8px 8px 0 0; background: #e6e6e6; box-shadow: 0 0 10px rgba(0,0,0,.16); display: flex; gap: 2.700px; padding: 9px 0 0 7px; }
.dock i { width: 30px; height: 30px; border-radius: 50%; background: #7289ba; display: grid; place-items: center; }
.dock svg { width: 15px; height: 15px; fill: none; stroke: #e6e6e6; stroke-width: 2.400; }

.modal { position: absolute; left: 738px; top: 214px; width: 440px; height: 400px; background: #fff; font-family: "Liberation Sans", Arial, sans-serif; color: #444; }
.modal h2 { margin: 0 0 1px; height: 25px; background: #1743a6; color: #fff; font: 700 12.600px/26px Carlito, Lato, sans-serif; padding-left: 6px; }
.src { display: flex; margin: 0 5px 0 1px; height: 28px; background: #1743a6; color: #fff; font-size: 12px; line-height: 27px; padding: 0 0 0 4px; }
.src b { width: 145px; white-space: nowrap; }
.select { width: 215px; height: 19px; margin-top: 5px; border: 1px solid #aaa; background: #fff; color: #000; font-size: 11px; line-height: 20px; padding-left: 4px; }
.src i { width: 17px; height: 19px; margin-top: 5px; border-bottom: 1px solid #8a9cc8; }
.srcname { margin: 0 1px; height: 32px; background: #dfe8f6; color: #666; font: 700 12px/19px Carlito, Lato, sans-serif; padding-left: 6px; }
.filter { margin: 0 1px; height: 26px; background: #1743a6; display: flex; justify-content: space-between; padding: 4px 24px 0 19px; color: #fff; }
.filter b { font: 700 14.100px/19px Carlito, Lato, sans-serif; }
.fin { width: 151px; height: 19px; background: #fff; border: 1px solid #aaa; color: #777; font-size: 11px; line-height: 21px; padding-left: 4px; }
.results { margin-left: 1px; width: 419px; height: 132px; background: #ededed; padding: 6px 13px 0 15px; }
.card { height: 120px; width: 391px; background: #fff; border: 1px solid #c4c4c4; border-radius: 5px; box-shadow: 0 1px 2px rgba(0,0,0,.3); overflow: hidden; }
.card h3 { margin: 0; height: 22px; background: #e9e9e9; border-bottom: 1px solid #d8d8d8; color: #0882a3; font: 700 14px/30px "Liberation Sans", Arial, sans-serif; letter-spacing: .35px; padding-left: 4px; }
.info { display: flex; height: 69px; padding: 8px 0 0 1px; }
.noimg { width: 40px; height: 40px; margin-top: 9px; background: linear-gradient(120deg, #d2d2d2, #e0e0e0 50%, #c6c6c6); }
.noimg text { font: 700 12px "Liberation Sans", Arial, sans-serif; fill: #9c9c9c; }
.noimg .l2 { font-size: 10px; }
.noimg .l3 { font-size: 6.500px; }
.meta { margin-left: 161px; font-size: 11px; line-height: 13.200px; }
.osm { font: 14.200px/13px Carlito, Lato, sans-serif; }
.add { height: 23px; width: 385px; background: #1743a6; color: #fff; display: flex; align-items: center; justify-content: center; gap: 2px; font: 700 14.100px/23px Carlito, Lato, sans-serif; }

.status { flex: none; height: 22px; margin: 0 2px; background: #7289ba; color: #e8e8e8; font-size: 13.800px; font-weight: 700; line-height: 27px; padding-left: 7px; display: flex; gap: 4px; white-space: nowrap; }
.status em { color: #e6e6a8; }
```
